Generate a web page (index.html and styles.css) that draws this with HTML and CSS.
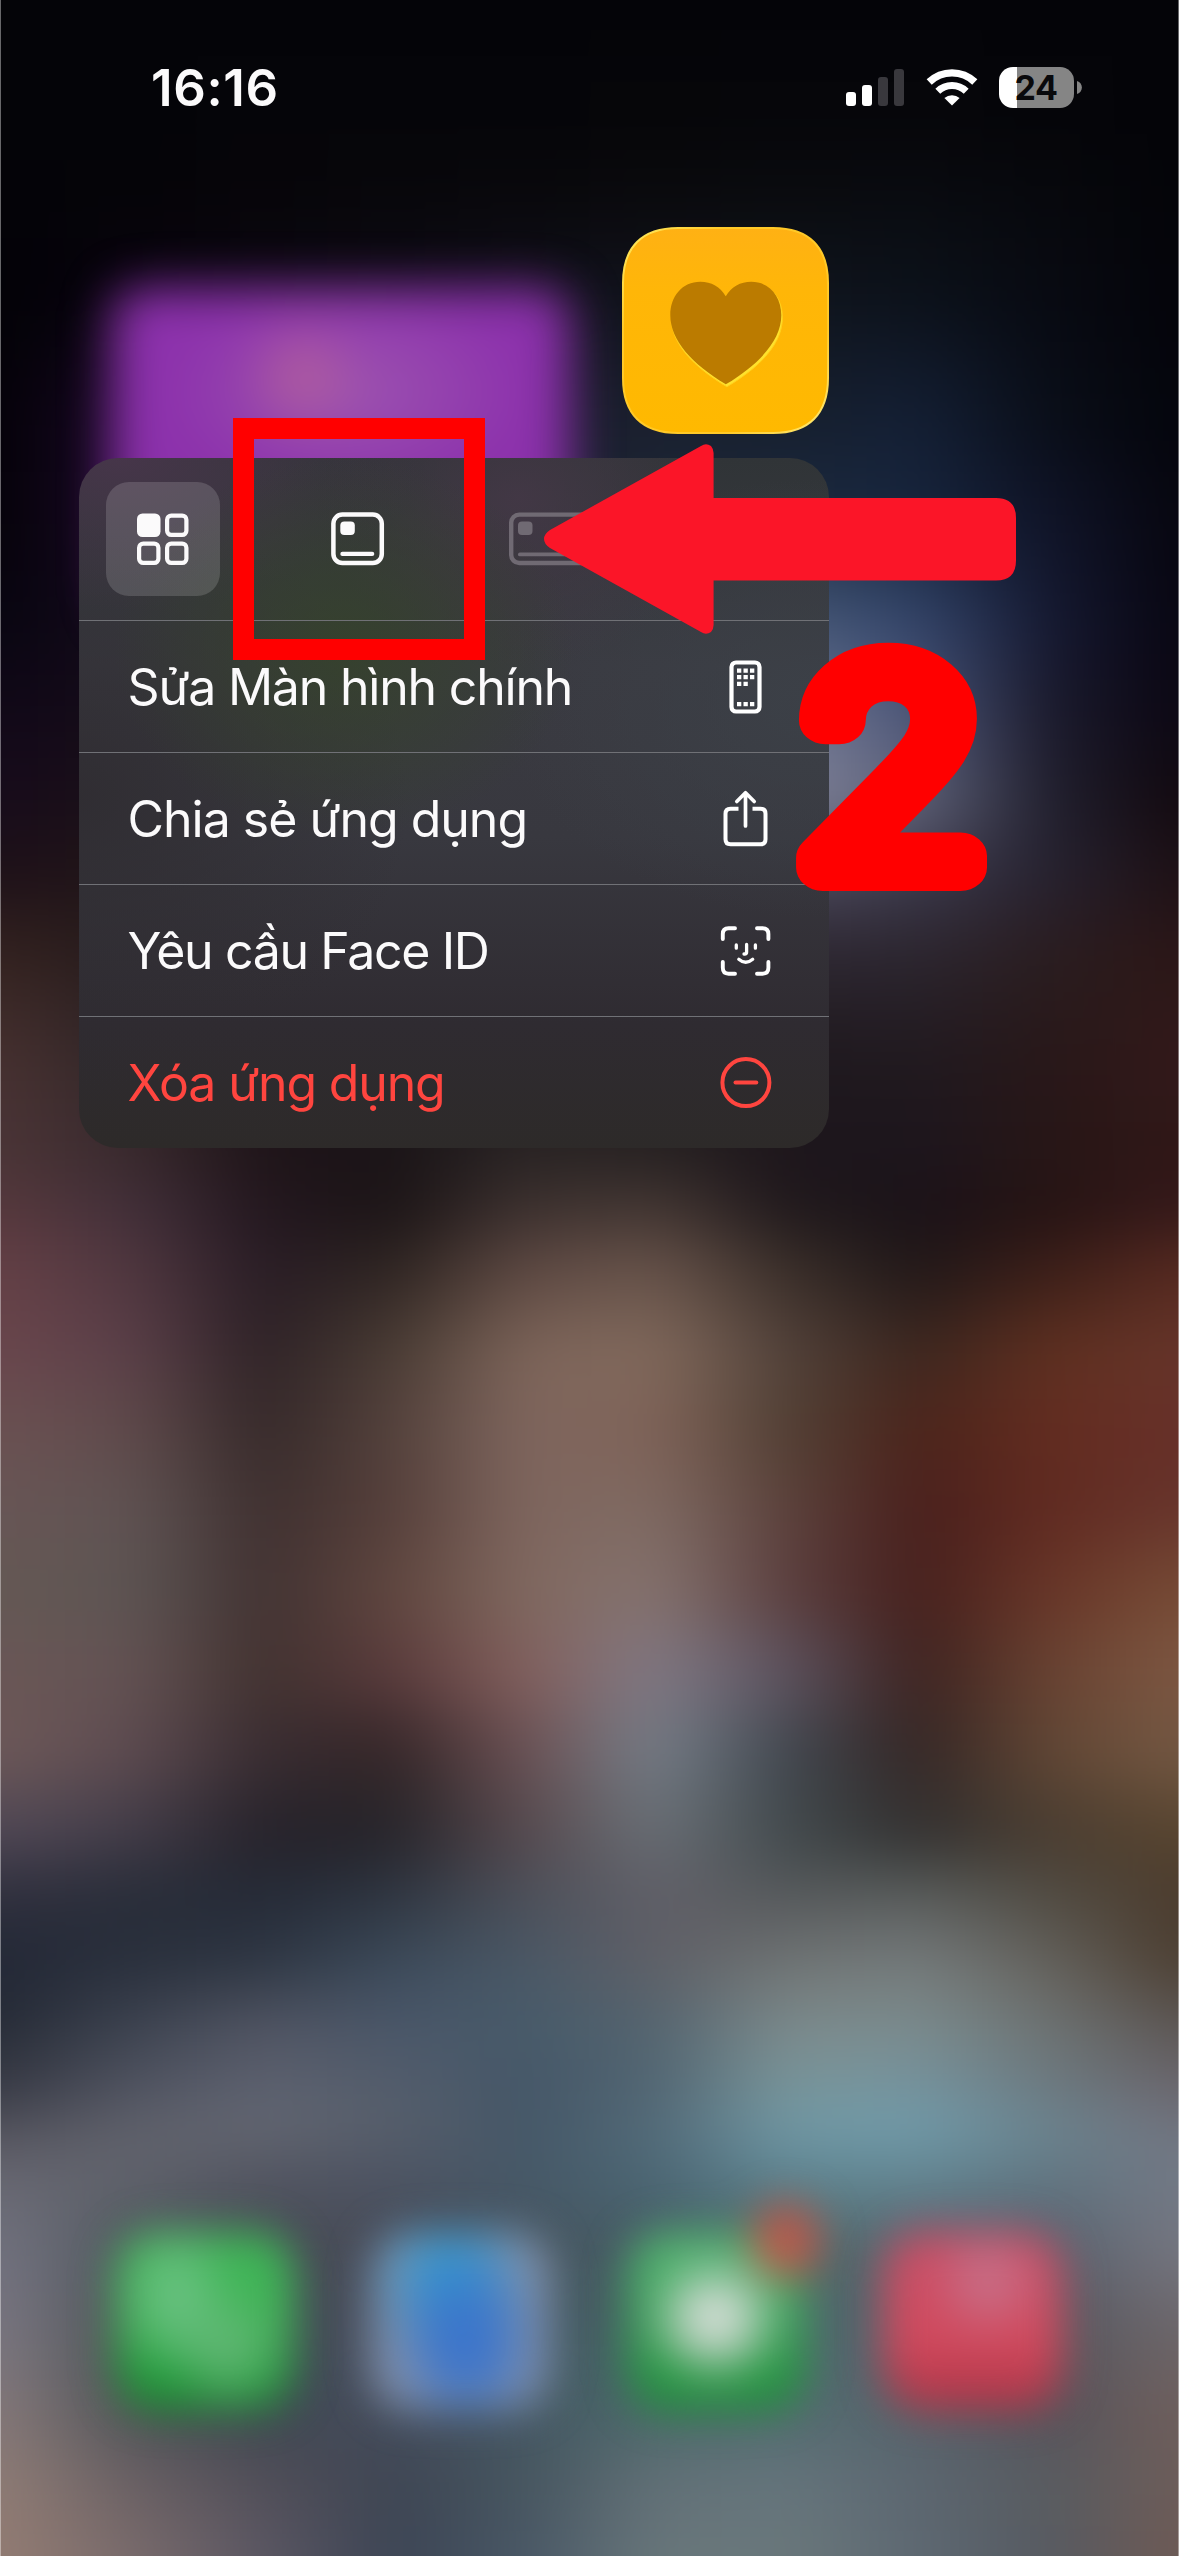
FILE: index.html
```html
<!DOCTYPE html>
<html lang="vi">
<head>
<meta charset="utf-8">
<title>Màn hình chính</title>
<link rel="stylesheet" href="styles.css">
</head>
<body>
<main class="screen">
  <svg class="filters" width="0" height="0" aria-hidden="true">
    <filter id="soften" x="0" y="0" width="100%" height="100%" color-interpolation-filters="sRGB"><feGaussianBlur stdDeviation="32 24"/></filter>
  </svg>
  <div class="wallpaper" id="wallpaper"></div>
  <div class="widget"></div>
  <div class="dock">
    <div class="dock-app phone"></div>
    <div class="dock-app safari"></div>
    <div class="dock-app messages"><span class="dock-badge"></span></div>
    <div class="dock-app music"></div>
  </div>

  <header class="status">
    <span class="time">16:16</span>
    <div class="indicators">
      <svg class="signal" viewBox="0 0 58 37"><rect y="23" width="10" height="14" rx="3" fill="#fff"/><rect x="16" y="16" width="10" height="21" rx="3" fill="#fff"/><rect x="32" y="8" width="10" height="29" rx="3" fill="#39383d"/><rect x="48" width="10" height="37" rx="3" fill="#39383d"/></svg>
      <svg class="wifi" viewBox="0 0 52 38"><g fill="none" stroke="#fff"><path d="M3.2 14 A33 33 0 0 1 48.8 14" stroke-width="7.4"/><path d="M11.8 23.2 A20.5 20.5 0 0 1 40.2 23.2" stroke-width="7"/></g><path d="M26 37.6 L18.4 30 A11.5 11.5 0 0 1 33.6 30 Z" fill="#fff"/></svg>
      <div class="battery"><span class="battery-level">24</span><svg class="battery-tip" viewBox="0 0 5 13"><path d="M0 0 C6.5 2 6.5 11 0 13 Z" fill="#858585"/></svg></div>
    </div>
  </header>

  <section class="focus">
    <svg class="app-icon" viewBox="0 0 207 207">
      <defs><linearGradient id="gold" x1="0" y1="0" x2="0" y2="1"><stop offset="0" stop-color="#ffb114"/><stop offset=".3" stop-color="#ffb608"/><stop offset="1" stop-color="#ffb900"/></linearGradient>
      <linearGradient id="rim" x1="0" y1="0" x2="1" y2="1"><stop offset="0" stop-color="#ffec62"/><stop offset=".25" stop-color="#ffc928"/><stop offset=".75" stop-color="#ffc928"/><stop offset="1" stop-color="#ffec7a"/></linearGradient></defs>
      <path d="M56 1 H151 C187 1 206 20 206 56 V151 C206 187 187 206 151 206 H56 C20 206 1 187 1 151 V56 C1 20 20 1 56 1 Z" fill="url(#gold)" stroke="url(#rim)" stroke-width="2"/>
      <path d="M103.500 70 C98 60 89 55 78 55 C60 55 48 69 48 89 C48 115 70 138 103.500 158 C137 138 159 115 159 89 C159 69 147 55 129 55 C118 55 109 60 103.500 70 Z" fill="#ffe22c" transform="translate(1.400 1.800)" stroke="#ffd01c" stroke-width="1"/>
      <path d="M103.500 69 C98 59.500 89 54.500 78 54.500 C60 54.500 48 69 48 88 C48 113 70 137 103.500 157 C137 137 159 113 159 88 C159 69 147 54.500 129 54.500 C118 54.500 109 59.500 103.500 69 Z" fill="#bb7b00" transform="translate(.3 .300)"/>
    </svg>

    <div class="menu">
      <div class="sizes">
        <div class="size selected"><svg viewBox="0 0 56 56" fill="none" stroke="#fbfafb" stroke-width="4.200"><rect x="2" y="2.500" width="23.500" height="23.500" rx="5.500" fill="#fbfafb" stroke="none"/><rect x="32.100" y="4.600" width="19.300" height="19.300" rx="4.200"/><rect x="4.100" y="32.600" width="19.300" height="19.300" rx="4.200"/><rect x="32.100" y="32.600" width="19.300" height="19.300" rx="4.200"/></svg></div>
        <div class="size"><svg viewBox="-.8 0 56 56"><rect x="3.600" y="3.600" width="48.400" height="48.400" rx="9" fill="none" stroke="#fbfafb" stroke-width="4.500"/><rect x="10.500" y="10.500" width="14.500" height="13.500" rx="4" fill="#fbfafb"/><rect x="10.500" y="40.800" width="34" height="4.200" rx="2.100" fill="#fbfafb"/></svg></div>
        <div class="size faded"><svg class="wide" viewBox="-1 0 90 56"><rect x="4.200" y="3.600" width="81.600" height="48.400" rx="8" fill="none" stroke="#706a73" stroke-width="4.400"/><rect x="11" y="10.500" width="14.500" height="13.500" rx="4" fill="#706a73"/><rect x="11" y="41.500" width="68" height="3.800" rx="1.900" fill="#706a73"/></svg></div>
        <div class="size"></div>
      </div>
      <div class="item"><span class="label edit">Sửa Màn hình chính</span>
        <svg viewBox="0 0 60 60"><rect x="15.500" y="5.500" width="28" height="49" rx="4.500" fill="none" stroke="#fff" stroke-width="4.200"/><path d="M21 11.500h4.300v4.300H21z M27.500 11.500h4.300v4.300h-4.300z M34 11.500h4.300v4.300H34z M21 18h4.300v4.300H21z M27.500 18h4.300v4.300h-4.300z M34 18h4.300v4.300H34z M21 24.700h4.300V29H21z M27.500 24.700h4.300V29h-4.300z M21 45h4.300v4.300H21z M27.500 45h4.300v4.300h-4.300z M34 45h4.300v4.300H34z" fill="#fff"/></svg></div>
      <div class="item"><span class="label share">Chia sẻ ứng dụng</span>
        <svg viewBox="0 0 60 60" fill="none" stroke="#fff" stroke-width="4" stroke-linecap="round" stroke-linejoin="round"><path d="M22.500 19.700H14.500Q9.500 19.700 9.500 24.700V50.300Q9.500 55.300 14.500 55.300H44.500Q49.500 55.300 49.500 50.300V24.700Q49.500 19.700 44.500 19.700H36.500" stroke-linecap="butt"/><path d="M29.500 37V4M20.800 12.500L29.500 3.800L38.200 12.500" stroke-width="3.700"/></svg></div>
      <div class="item"><span class="label face">Yêu cầu Face ID</span>
        <svg viewBox="0 0 60 60" fill="none" stroke="#fff" stroke-width="3.900" stroke-linecap="round" stroke-linejoin="round"><path d="M6.800 18V13Q6.800 7.200 12.600 7.200H19M41 7.200H46.500Q52.400 7.200 52.400 13V18M6.800 41V46.800Q6.800 52.700 12.600 52.700H19M41 52.700H46.500Q52.400 52.700 52.400 46.800V41"/><path d="M20.300 24V27.200M39.400 24V27.200M30.600 23.500V31.200Q30.600 33 28.600 33H28M22.800 38.300Q29.700 44.300 36.700 38.300" stroke-width="3.300"/></svg></div>
      <div class="item danger"><span class="label remove">Xóa ứng dụng</span>
        <svg viewBox="0 0 60 60" fill="none" stroke="#ff453f" stroke-width="4" stroke-linecap="round"><circle cx="29.900" cy="29.600" r="23.500"/><path d="M19.500 29.600H40.300"/></svg></div>
    </div>
  </section>

  <div class="mark-box"></div>
  <svg class="mark-arrow" viewBox="0 0 480 200"><path d="M10 89 L161 5 Q166 1.500 171 5 Q173.600 8 173.600 12 V57 H456 Q476 57 476 77 V119.500 Q476 139.500 456 139.500 H173.600 V184 Q173.600 188 171 191 Q166 194.500 161 191 L10 107 Q4 103 4 98 Q4 93 10 89 Z" fill="#fb1528"/></svg>
  <svg class="mark-number" viewBox="0 0 260 420"><text x="14" y="307.500" transform="scale(1.130 1)">2</text></svg>
  <i class="edge"></i>
</main>
<script src="wallpaper.js"></script>
</body>
</html>
```
FILE: styles.css
```css
* { box-sizing: border-box; }
body { margin: 0; background: #050509; }
.screen { position: relative; width: 1179px; height: 2556px; overflow: hidden; font-family: Inter, "Noto Sans", sans-serif; color: #fbfafb; isolation: isolate; }
.filters { position: absolute; }

/* Blurred home screen */
.wallpaper { position: absolute; z-index: -3; left: -131px; top: -100px; width: 1441px; height: 2756px; display: flex; flex-direction: column; filter: url(#soften); }
.band { flex: none; }
.widget { position: absolute; z-index: -2; left: 112px; top: 288px; width: 458px; height: 330px; border-radius: 30px; filter: blur(24px);
  background: radial-gradient(ellipse 60px 60px at 190px 88px, #b5609a, transparent), radial-gradient(ellipse 190px 110px at 235px 103px, #9d55b0, transparent), #8c31ac; }
.dock { position: absolute; z-index: -2; left: 115px; top: 2231px; width: 948px; display: flex; justify-content: space-between; }
.dock-app { position: relative; width: 180px; height: 180px; border-radius: 42px; filter: blur(20px); }
.phone { background: radial-gradient(ellipse 60px 90px at 60px 65px, #72c48a, transparent), radial-gradient(ellipse 65px 65px at 115px 120px, #6aba7c, transparent), linear-gradient(#3fb456 45%, #158a2c); }
.safari { background: radial-gradient(ellipse 80px 100px at 95px 110px, #3a74cc 25%, transparent), radial-gradient(ellipse 80px 90px at 80px 50px, #2f9ad0 20%, transparent), #8290aa; }
.messages { background: radial-gradient(ellipse 72px 68px at 88px 88px, #e0e2e0 20%, transparent), linear-gradient(#55b473, #1d8e38); }
.music { background: radial-gradient(ellipse 60px 60px at 105px 50px, #c77790, transparent), linear-gradient(#c65068, #d24a5e 60%, #ab3345); }
.dock-badge { position: absolute; left: 124px; top: -28px; width: 70px; height: 76px; border-radius: 50%; background: #b95a4c; }

/* Status bar */
.status { height: 227px; padding: 58px 97.5px 0 151px; display: flex; align-items: flex-start; justify-content: space-between; }
.time { font-size: 51px; line-height: 60px; font-weight: 600; letter-spacing: .6px; }
.indicators { display: flex; align-items: flex-start; padding-top: 9px; }
.signal { width: 58px; height: 37px; margin-top: 2px; }
.wifi { width: 52px; height: 38px; margin: 1px 21px 0 22px; }
.battery { display: flex; align-items: center; gap: 3px; }
.battery-level { width: 75px; height: 41px; border-radius: 14px; background: linear-gradient(90deg, #fff 18px, #858585 18px); color: #09090c; font-size: 34px; font-weight: 700; line-height: 41px; text-align: center; letter-spacing: -.5px; }
.battery-tip { width: 5px; height: 13px; }

/* Lifted app and its menu */
.focus { width: 750px; margin-left: 79px; display: flex; flex-direction: column; align-items: flex-end; gap: 24px; }
.app-icon { width: 207px; height: 207px; }
.menu { width: 750px; height: 690px; border-radius: 39px; overflow: hidden;
  background:
    radial-gradient(ellipse 230px 190px at 265px 190px, rgba(53,66,43,.9), transparent),
    radial-gradient(ellipse 300px 150px at 40px 0, rgba(74,54,77,.85), transparent),
    radial-gradient(ellipse 200px 170px at 440px 40px, rgba(70,56,72,.8), transparent),
    radial-gradient(ellipse 320px 220px at 740px 240px, rgba(60,65,72,.9), transparent),
    radial-gradient(ellipse 330px 300px at 0 340px, rgba(47,44,49,.9), transparent),
    linear-gradient(#303437, #3a3a41 30%, #38383f 55%, #2f2b31 82%, #2d2a29); }
.sizes { height: 162px; padding: 0 27px; display: flex; align-items: center; justify-content: space-between; }
.size { width: 114px; height: 114px; border-radius: 23px; display: flex; align-items: center; justify-content: center; }
.size svg { width: 56px; height: 56px; flex: none; }
.size .wide { width: 90px; }
.selected { background: rgba(255,255,255,.15); }
.item { height: 132px; padding: 1px 53.5px 0 48.5px; border-top: 1px solid #707176; display: flex; align-items: center; justify-content: space-between; }
.item svg { width: 60px; height: 60px; }
.label { font-size: 50px; line-height: 60px; white-space: nowrap; letter-spacing: -1px; }
.edit { letter-spacing: -1.2px; }
.face { letter-spacing: -1.35px; }
.remove { letter-spacing: -1.15px; }
.danger { color: #ff453f; }

/* Instruction marks drawn over the screen */
.mark-box { position: absolute; left: 233px; top: 418px; width: 252px; height: 242px; border: 21px solid #f00; }
.mark-arrow { position: absolute; left: 540px; top: 441px; width: 480px; height: 200px; }
.mark-number { position: absolute; left: 780px; top: 560px; width: 260px; height: 420px; }
.mark-number text { font: 200 273px Inter, sans-serif; fill: #f00; stroke: #f00; stroke-width: 47px; stroke-linejoin: round; }
.edge { position: absolute; left: 0; top: 0; width: 1179px; height: 2556px; border: solid rgba(255,255,255,.4); border-width: 0 1px; }
```
FILE: wallpaper.js
```js
// Each row: y, then colours at ten evenly spaced points from left to right.
const rows = `
0 040408 040408 040408 040408 040408 040408 040408 040408 040408 040408
120 040408 040408 050509 050509 050509 060609 06060a 06060a 050509 040408
200 040308 050408 070509 08070b 09080c 0a0a0d 0a0b0f 090b10 07080d 040408
300 030207 08030e 0c0713 0d0a15 10101a 11141e 10151e 0c121b 080a12 04040a
420 040108 1b0a28 1b0a28 1b0a28 1b1a2c 1b2130 17202f 142036 0a0e19 04050c
520 050209 1b0a28 1b0a28 1b0a28 1b2030 1b2735 1b2a40 17253d 101428 07060f
620 080510 140a1b 1b1520 1b1520 203040 304460 485a7a 33456a 151931 080612
720 110818 160d18 1b1520 1b1520 304050 556078 737a93 4f587b 1b1a2c 0c0713
800 170b1b 1b1018 1b1520 1b1520 304050 5c6780 85869c 606379 201f2e 12090f
870 1e1018 201518 1b1520 1b1520 252530 353545 504e61 3d3b4e 262230 1d1015
950 33221f 251a1c 1b1520 1b1520 201c22 25222a 2e2833 2c2630 2a1d20 2b1616
1050 46302f 2f2527 1b1520 1a1417 1e191c 1e191c 1f191e 211a20 281819 33191a
1150 4b3537 3a2a2e 1f1418 1a1417 2b2525 292323 1d151b 1c151d 271616 301716
1200 56383c 42303a 23171f 1b1416 3d312f 443733 20191c 1b1218 251313 35191a
1270 644046 50373f 281c25 2d2421 5d4942 67534b 3a2e29 1f1718 3b1e18 56291f
1350 6a464d 5b4049 2e2226 4a3c34 7e655a 826a5c 52423a 3c261f 5f3020 66352a
1430 6a5152 5f4a4b 352929 54423c 7f665e 7f6258 514034 4c241b 632c20 672f28
1510 685655 5f5353 3e3030 553f3a 7f665e 7f6a62 5b413c 491f1c 602a20 67342c
1590 645854 5d5453 413232 60463f 80685f 857370 5b4040 46201d 683628 774c36
1670 6a5756 635253 413230 593a3b 835f5c 807985 5c5360 3c2220 684232 7d5742
1750 6d5858 5d4b50 382c31 332527 6a5053 757e88 40474f 332625 604634 735742
1830 4f4755 423c48 26222a 25242a 56494e 696f76 424a4d 323131 4a3d31 57442f
1900 2e2e3c 272c38 242a37 2f3642 4b505a 605e67 56595b 5b5f5e 514c44 4a3a2d
1960 232836 2a303d 2f3744 3c4a5a 4a5866 5f6067 707575 757b7c 64625d 4d4033
2030 262b36 3d4350 525664 4a576a 465a6a 53646f 7d8b8d 7b8c8e 6e7373 5c5654
2090 3a3c47 525562 5d6270 545d6b 445667 526673 77969c 7394a0 6b7a82 6c6870
2130 53535d 61626c 646771 575e6b 455767 536b79 7099a6 709cac 6b8590 717480
2180 686872 5f626b 50535f 4c5362 465867 4b6673 5f8490 62838f 607480 727985
2250 72727f 50585f 484b56 474c57 46555f 465c64 4a6866 5a6570 58606c 757680
2330 7a7681 4d5256 414851 4a5261 445761 466466 4e6a6e 56606a 56565e 6c666a
2410 847879 505458 3f4752 454d5d 445763 4b6a6a 526b70 56646c 55525a 6f5f5c
2480 8f7c75 6a6064 514e58 3e4553 46555f 627077 65757c 5c6670 585b60 6c5c59
2556 937c73 7a6b6c 5b5763 3c4454 485766 68777b 6a787b 5d6872 555a61 6e5a54
2656 937c73 7a6b6c 5b5763 3c4454 485766 68777b 6a787b 5d6872 555a61 6e5a54`
  .trim().split("\n").map(line => line.split(" "));

const rgb = hex => [0, 2, 4].map(i => parseInt(hex.slice(i, i + 2), 16));
const wallpaper = document.getElementById("wallpaper");
const step = 26;

for (let y = -100; y < 2656; y += step) {
  let i = 0;
  while (i < rows.length - 2 && +rows[i + 1][0] < y) i++;
  const [top, bottom] = [rows[i], rows[i + 1]];
  const t = Math.max(0, Math.min(1, (y + step / 2 - top[0]) / (bottom[0] - top[0])));
  const colours = top.slice(1).map((hex, n) => {
    const a = rgb(hex), b = rgb(bottom[n + 1]);
    return `rgb(${a.map((v, k) => Math.round(v + (b[k] - v) * t)).join()})`;
  });
  const band = document.createElement("div");
  band.className = "band";
  band.style.height = `${step}px`;
  band.style.background = `linear-gradient(90deg, ${[colours[0], ...colours, colours[9]].join()})`;
  wallpaper.append(band);
}
```
